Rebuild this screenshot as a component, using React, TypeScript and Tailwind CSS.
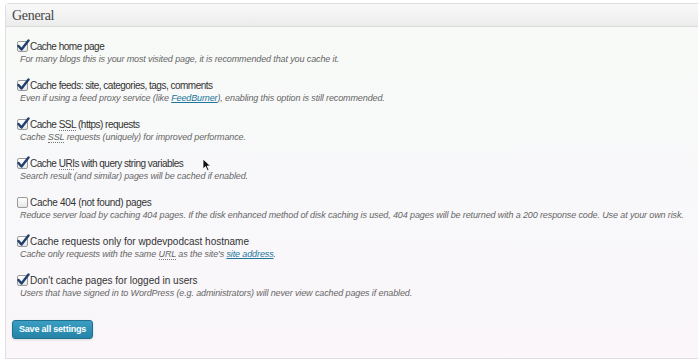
import React from 'react';

// --- CHECKBOX ---
const Check: React.FC<{ checked?: boolean }> = ({ checked }) => (
  <span className="relative inline-block w-[11px] h-[11px] mr-[2px] shrink-0">
    <span className="absolute inset-0 rounded-[2px] border border-[#9a9a9a] bg-gradient-to-b from-white to-[#e6e6e6]" />
    {checked && (
      <svg className="absolute -top-[2px] left-0" width="13" height="13" viewBox="0 0 13 13">
        <path d="M1.5 7 L4.5 10.5 L11.5 1.5" fill="none" stroke="#1f3f6e" strokeWidth="2.4" strokeLinecap="round" strokeLinejoin="round" />
      </svg>
    )}
  </span>
);

const Abbr: React.FC<{ children: React.ReactNode }> = ({ children }) => (
  <abbr className="no-underline border-b border-dotted border-[#777]">{children}</abbr>
);

const Link: React.FC<{ children: React.ReactNode }> = ({ children }) => (
  <a className="text-[#21759b] underline">{children}</a>
);

interface ItemProps {
  checked?: boolean;
  label: React.ReactNode;
  desc: React.ReactNode;
  tracking?: string;
}

const Item: React.FC<ItemProps> = ({ checked = true, label, desc, tracking = 'tracking-[-0.5px]' }) => (
  <div className="mb-[14px]">
    <div className={`flex items-center h-[13px] text-[10px] text-[#333] ${tracking}`}>
      <Check checked={checked} />
      <span>{label}</span>
    </div>
    <div className="mt-[1px] ml-[3px] h-[11px] text-[9px] leading-[11px] tracking-[-0.12px] italic text-[#666] whitespace-nowrap">{desc}</div>
  </div>
);

export default function App() {
  return (
    <div className="w-[698px] h-[363px] bg-white pt-[3px] pl-[5px] font-['Liberation_Sans',Arial,sans-serif]">
      <div className="relative h-[356px] border border-r-0 border-[#dfdfdf] rounded-tl-[4px] bg-gradient-to-b from-[#f7faf6] via-[#f8f8fa] to-[#faf6f9] flex flex-col">
        <div className="h-[23px] flex items-center pl-[6px] border-b border-[#d9d9d9] bg-gradient-to-b from-[#f9f9f9] to-[#ececec] font-['Liberation_Serif',Georgia,serif] text-[14px] tracking-[-0.3px] text-[#464646]">
          General
        </div>
        <div className="pl-[11px] pt-[13px]">
          <Item label="Cache home page" desc="For many blogs this is your most visited page, it is recommended that you cache it." />
          <Item
            label="Cache feeds: site, categories, tags, comments"
            desc={<>Even if using a feed proxy service (like <Link>FeedBurner</Link>), enabling this option is still recommended.</>}
          />
          <Item
            label={<>Cache <Abbr>SSL</Abbr> (https) requests</>}
            desc={<>Cache <Abbr>SSL</Abbr> requests (uniquely) for improved performance.</>}
          />
          <Item
            label={<>Cache <Abbr>URI</Abbr>s with query string variables</>}
            desc="Search result (and similar) pages will be cached if enabled."
          />
          <Item
            checked={false}
            tracking="tracking-[-0.3px]"
            label="Cache 404 (not found) pages"
            desc="Reduce server load by caching 404 pages. If the disk enhanced method of disk caching is used, 404 pages will be returned with a 200 response code. Use at your own risk."
          />
          <Item
            tracking="tracking-normal"
            label="Cache requests only for wpdevpodcast hostname"
            desc={<>Cache only requests with the same <Abbr>URL</Abbr> as the site's <Link>site address</Link>.</>}
          />
          <Item
            tracking="tracking-normal"
            label="Don't cache pages for logged in users"
            desc="Users that have signed in to WordPress (e.g. administrators) will never view cached pages if enabled."
          />
          <button className="mt-[7px] -ml-[5px] h-[19px] px-[6px] rounded-[3px] border border-[#1f6f8f] bg-gradient-to-b from-[#3a9ec2] to-[#2583a8] text-white text-[9px] font-bold tracking-[-0.2px] shadow-sm">
            Save all settings
          </button>
        </div>
        {/* mouse pointer */}
        <svg className="absolute left-[196px] top-[154px]" width="10" height="14" viewBox="0 0 10 14">
          <path d="M1 1 L1 11 L3.5 8.6 L5.4 12.6 L7 11.9 L5.2 8 L8.5 8 Z" fill="#111" stroke="#fff" strokeWidth="0.8" />
        </svg>
      </div>
    </div>
  );
}
